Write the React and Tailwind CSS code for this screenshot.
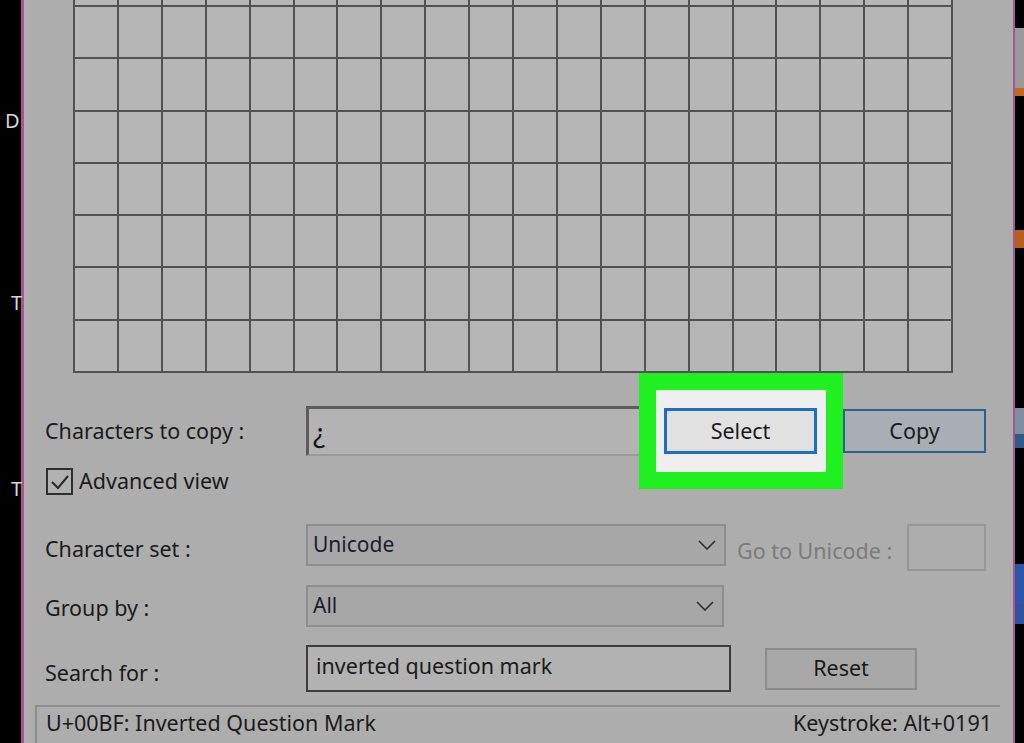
import React from "react";

const font = { fontFamily: '"Noto Sans", "Open Sans", sans-serif' };

function Chevron() {
    return (
        <svg width="18" height="10" viewBox="0 0 18 10" className="text-[#2e2e2e]">
            <polyline points="1,1 9,9 17,1" fill="none" stroke="currentColor" strokeWidth="1.6" />
        </svg>
    );
}

function CharGrid() {
    const cells = [];
    for (let r = 0; r < 8; r++) {
        for (let c = 0; c < 20; c++) {
            cells.push(<div key={`${r}-${c}`} className="bg-[#b6b6b6]" />);
        }
    }
    return (
        <div className="ml-[46px] w-[880px] h-[373px] shrink-0 bg-[#525252] px-[2px] pb-[2px] grid grid-cols-20 grid-rows-[5px_repeat(7,1fr)] gap-[2px]">
            {cells}
        </div>
    );
}

function Dropdown({ value, width }) {
    return (
        <div className={`${width} h-[42px] bg-[#a7a7a7] border-2 border-[#8e8e8e] flex items-center justify-between pl-[5px] pr-[8px]`}>
            <span className="text-[21px] text-[#1c1c2e]">{value}</span>
            <Chevron />
        </div>
    );
}

export default function App() {
    return (
        <div className="w-[1024px] h-[743px] overflow-hidden flex bg-black" style={font}>
            {/* desktop behind, left */}
            <div className="w-[21px] shrink-0 bg-black relative text-[#d8d8d8] text-[20px]">
                <span className="absolute left-[5px] top-[106px]">D</span>
                <span className="absolute left-[11px] top-[288px]">T</span>
                <span className="absolute left-[11px] top-[474px]">T</span>
            </div>
            <div className="w-[3px] shrink-0 bg-[#a5578f]" />

            {/* Character Map window */}
            <div className="w-[989px] shrink-0 bg-[#adadad] border-l-[3px] border-[#b9a9b5] relative flex flex-col text-[#1b1b1b] text-[21.5px]">
                <CharGrid />

                <div className="flex items-center mt-[33px] h-[50px] pl-[18px]">
                    <span className="w-[261px]">Characters to copy :</span>
                    <div className="w-[354px] h-[50px] bg-[#b3b3b3] border-t-[3px] border-l-[3px] border-[#5c5c5c] border-b-2 border-b-[#9a9a9a] flex items-center pl-[4px]">
                        <span className="text-[28px] text-[#111]">¿</span>
                    </div>
                    <button className="relative z-20 ml-[4px] w-[153px] h-[46px] bg-[#e1e1e1] border-[3px] border-[#1d6fc4] text-[#1a1a1a]">
                        Select
                    </button>
                    <button className="ml-[26px] w-[143px] h-[44px] bg-[#a9aeb4] border-2 border-[#2f5f8c] text-[#1a1a1a]">
                        Copy
                    </button>
                </div>

                <div className="flex items-center mt-[12px] h-[27px] pl-[19px]">
                    <div className="w-[27px] h-[27px] border-2 border-[#2e2e2e] bg-[#b1b1b1] flex items-center justify-center">
                        <svg width="20" height="16" viewBox="0 0 20 16">
                            <polyline points="2,8 8,14 18,2" fill="none" stroke="#2a2a2a" strokeWidth="2" />
                        </svg>
                    </div>
                    <span className="ml-[6px]">Advanced view</span>
                </div>

                <div className="flex items-start mt-[29px] h-[47px] pl-[18px]">
                    <span className="w-[261px] pt-[9px]">Character set :</span>
                    <Dropdown value="Unicode" width="w-[420px]" />
                    <span className="ml-[11px] w-[170px] text-[#7b7b7b] pt-[11px]">Go to Unicode :</span>
                    <div className="w-[79px] h-[47px] border-2 border-[#979797] bg-[#adadad]" />
                </div>

                <div className="flex items-center mt-[14px] h-[42px] pl-[18px]">
                    <span className="w-[261px] pt-[4px]">Group by :</span>
                    <Dropdown value="All" width="w-[418px]" />
                </div>

                <div className="flex items-center mt-[18px] h-[47px] pl-[18px]">
                    <span className="w-[261px] pt-[10px]">Search for :</span>
                    <div className="w-[425px] h-[47px] border-2 border-[#3c3c3c] bg-[#b2b2b2] flex items-center pl-[8px] pb-[4px]">
                        <span>inverted question mark</span>
                    </div>
                    <button className="ml-[34px] w-[152px] h-[42px] bg-[#a8a8a8] border-2 border-[#8b8b8b] text-[#1a1a1a]">
                        Reset
                    </button>
                </div>

                <div className="mt-[13px] ml-[8px] w-[965px] flex-1 border-t-2 border-l-2 border-[#8c8c8c] flex items-start justify-between pl-[9px] pr-[8px]">
                    <span>U+00BF: Inverted Question Mark</span>
                    <span>Keystroke: Alt+0191</span>
                </div>

                {/* highlight frame */}
                <div className="absolute z-10 left-[612px] top-[373px] w-[204px] h-[116px] border-[17px] border-[#20f020] bg-[#efefef]" />
            </div>

            <div className="w-[2px] shrink-0 bg-[#a5578f]" />
            {/* desktop behind, right */}
            <div className="flex-1 bg-black flex flex-col">
                <div className="h-[28px]" />
                <div className="h-[60px] bg-[#9a9a9a]" />
                <div className="h-[8px] bg-[#c2691c]" />
                <div className="h-[134px]" />
                <div className="h-[18px] bg-[#b8601a]" />
                <div className="h-[160px]" />
                <div className="h-[26px] bg-[#7f8fa0]" />
                <div className="h-[14px] bg-[#2f5b86]" />
                <div className="h-[116px]" />
                <div className="h-[40px] bg-[#2a55a8]" />
                <div className="h-[20px] bg-[#3050a0]" />
            </div>
        </div>
    );
}
